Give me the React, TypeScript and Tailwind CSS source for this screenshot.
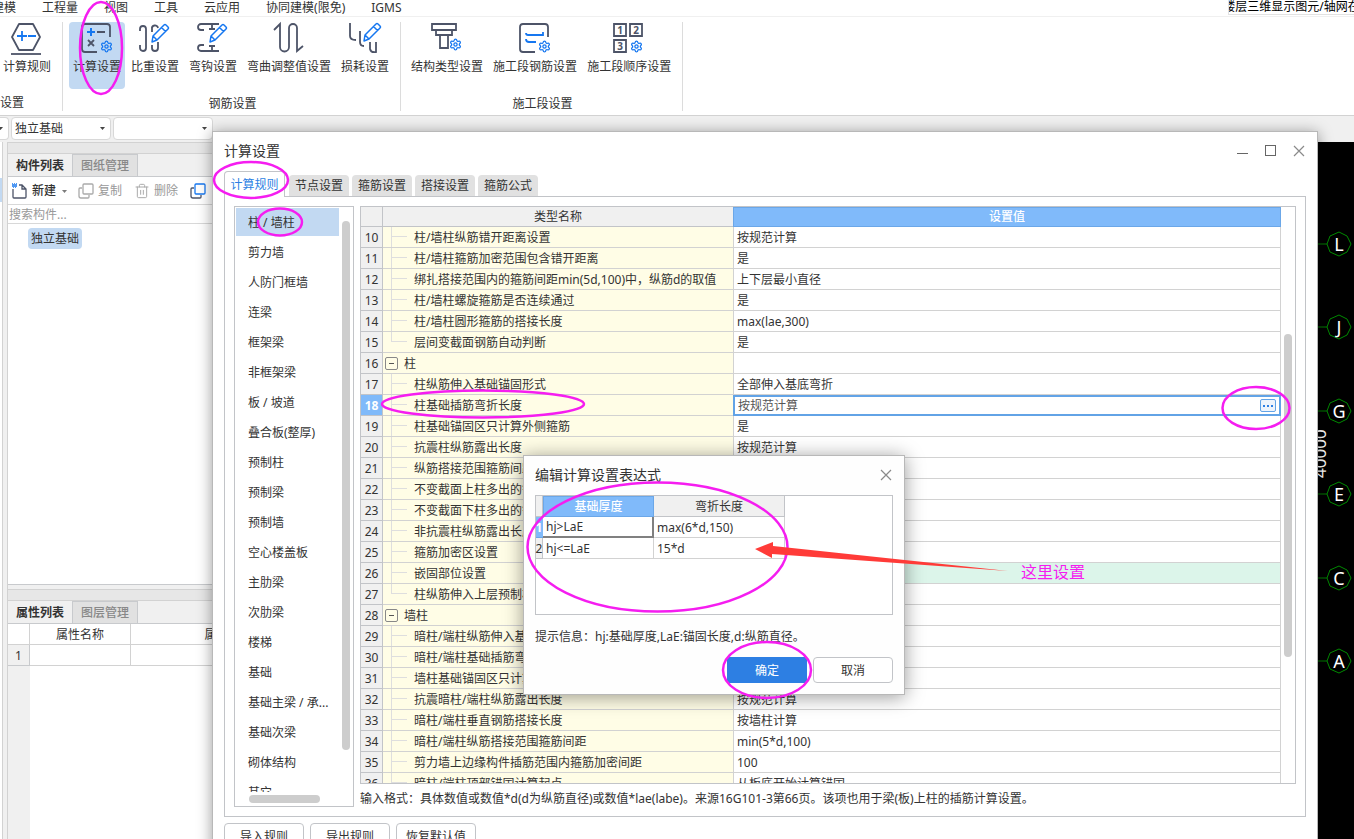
import type { ReactNode } from "react";
import { Settings, Trash2 } from "lucide-react";
import clsx from "clsx";

const INK = "#4d5468";
const BLUE = "#1677f0";

type Row = { no: number; name: string; value?: string; group?: boolean; last?: boolean };

const rows: Row[] = [
  { no: 10, name: "柱/墙柱纵筋错开距离设置", value: "按规范计算" },
  { no: 11, name: "柱/墙柱箍筋加密范围包含错开距离", value: "是" },
  { no: 12, name: "绑扎搭接范围内的箍筋间距min(5d,100)中，纵筋d的取值", value: "上下层最小直径" },
  { no: 13, name: "柱/墙柱螺旋箍筋是否连续通过", value: "是" },
  { no: 14, name: "柱/墙柱圆形箍筋的搭接长度", value: "max(lae,300)" },
  { no: 15, name: "层间变截面钢筋自动判断", value: "是", last: true },
  { no: 16, name: "柱", group: true },
  { no: 17, name: "柱纵筋伸入基础锚固形式", value: "全部伸入基底弯折" },
  { no: 18, name: "柱基础插筋弯折长度", value: "按规范计算" },
  { no: 19, name: "柱基础锚固区只计算外侧箍筋", value: "是" },
  { no: 20, name: "抗震柱纵筋露出长度", value: "按规范计算" },
  { no: 21, name: "纵筋搭接范围箍筋间距" },
  { no: 22, name: "不变截面上柱多出的钢筋" },
  { no: 23, name: "不变截面下柱多出的钢筋" },
  { no: 24, name: "非抗震柱纵筋露出长度" },
  { no: 25, name: "箍筋加密区设置" },
  { no: 26, name: "嵌固部位设置" },
  { no: 27, name: "柱纵筋伸入上层预制柱", last: true },
  { no: 28, name: "墙柱", group: true },
  { no: 29, name: "暗柱/端柱纵筋伸入基础" },
  { no: 30, name: "暗柱/端柱基础插筋弯折" },
  { no: 31, name: "墙柱基础锚固区只计算" },
  { no: 32, name: "抗震暗柱/端柱纵筋露出长度", value: "按规范计算" },
  { no: 33, name: "暗柱/端柱垂直钢筋搭接长度", value: "按墙柱计算" },
  { no: 34, name: "暗柱/端柱纵筋搭接范围箍筋间距", value: "min(5*d,100)" },
  { no: 35, name: "剪力墙上边缘构件插筋范围内箍筋加密间距", value: "100" },
  { no: 36, name: "暗柱/端柱顶部锚固计算起点", value: "从板底开始计算锚固" },
];

const members = [
  "柱 / 墙柱", "剪力墙", "人防门框墙", "连梁", "框架梁", "非框架梁", "板 / 坡道",
  "叠合板(整厚)", "预制柱", "预制梁", "预制墙", "空心楼盖板", "主肋梁", "次肋梁",
  "楼梯", "基础", "基础主梁 / 承...", "基础次梁", "砌体结构", "其它",
];

const axes = [
  { label: "L", y: 102 },
  { label: "J", y: 185 },
  { label: "G", y: 269 },
  { label: "E", y: 352 },
  { label: "C", y: 436 },
  { label: "A", y: 519 },
];

const Icon = ({ children }: { children: ReactNode }) => (
  <svg className="h-8 w-8 overflow-visible" viewBox="0 0 32 32" fill="none" stroke={INK} strokeWidth="1.800">
    {children}
  </svg>
);

const Gear = ({ x = 19, y = 17 }: { x?: number; y?: number }) => (
  <Settings x={x} y={y} size={13} color={BLUE} strokeWidth={2.4} />
);

const Pen = ({ x = 12, y = 1 }: { x?: number; y?: number }) => (
  <path
    transform={`translate(${x} ${y})`}
    d="M1 18l1-6L13 1q1-1 2 0l2 2q1 1 0 2L6 16zM10.500 3.500l4 4M2 12l4 4"
    stroke={BLUE}
    strokeWidth="1.500"
    strokeLinejoin="round"
  />
);

const icons = {
  rule: (
    <Icon>
      <path d="M8 1h14l7 13-7 13H8L1 14z" strokeLinejoin="round" />
      <path d="M6 13h10M11 8v10M17 13h8" stroke={BLUE} />
      <path d="M0 31h30" />
    </Icon>
  ),
  calc: (
    <Icon>
      <path d="M29 14V4q0-3-3-3H4Q1 1 1 4v22q0 3 3 3h12" />
      <path d="M6 9h8M10 5v8" stroke={BLUE} strokeWidth="2" />
      <path d="M16 9h8M7 17l6 6M13 17l-6 6" />
      <Gear />
    </Icon>
  ),
  weight: (
    <Icon>
      <path d="M1 8V6a3 3 0 0 1 6 0v19a3 3 0 0 1-6 0v-3" />
      <path d="M13 9V6a3 3 0 0 1 6-1M13 22v3a3 3 0 0 0 6 0v-6" />
      <Pen />
    </Icon>
  ),
  hook: (
    <Icon>
      <path d="M22 1H4a3 3 0 0 0 0 6h3M22 28H4a3 3 0 0 1 0-6h3M15 1v6M12 6h6M15 28v-6M12 23h6" />
      <Pen />
    </Icon>
  ),
  bend: (
    <Icon>
      <path d="M1 7l6-6v23a4 4 0 0 0 9 0V5a4 4 0 0 1 8 0v23l6-5" />
    </Icon>
  ),
  loss: (
    <Icon>
      <path d="M1 0v13q0 4 6 4M11 8v11q0 4 4 4M21 19v7q1 4 6 3V19" />
      <Pen x={14} y={0} />
    </Icon>
  ),
  column: (
    <Icon>
      <path d="M1 1h24v6H1zM5 7h16v5H5zM9 12h8v13H9z" />
      <Gear x={18} y={15} />
    </Icon>
  ),
  section: (
    <Icon>
      <path d="M29 14V4q0-3-3-3H4Q1 1 1 4v22q0 3 3 3h12" />
      <path d="M7 10q0 2 2 2h15v-3M7 16q0 3 3 3h7" stroke={BLUE} />
      <Gear />
    </Icon>
  ),
  order: (
    <Icon>
      <path d="M1 1h12v12H1zM17 1h12v12H17zM1 17h12v12H1z" />
      <g fill={INK} stroke="none" fontSize="10" fontWeight="700" textAnchor="middle">
        <text x="7" y="11">1</text>
        <text x="23" y="11">2</text>
        <text x="7" y="27">3</text>
      </g>
      <Gear x={17} />
    </Icon>
  ),
};

const RibbonButton = ({ icon, label, active }: { icon: ReactNode; label: string; active?: boolean }) => (
  <button className={clsx("flex h-[67px] flex-col items-center gap-1 rounded-sm px-1 pt-px", active && "bg-[#c2d9f2]")}>
    {icon}
    <span className="leading-4">{label}</span>
  </button>
);

const RibbonGroup = ({ title, children }: { title: string; children: ReactNode }) => (
  <div className="flex flex-col gap-[7px] border-r border-[#dcdcdc] pr-[7px] pl-1.5">
    <div className="flex gap-0.5">{children}</div>
    <div className="pl-[3px] text-center leading-4">{title}</div>
  </div>
);

const Ribbon = () => (
  <div className="flex h-[99px] shrink-0 overflow-hidden border-b border-[#d2d2d2] bg-white pt-[5px] pb-1 whitespace-nowrap">
    <div className="-ml-px flex flex-col gap-[7px] border-r border-[#dcdcdc] pr-[7px]">
      <RibbonButton icon={icons.rule} label="计算规则" />
      <div className="pl-px leading-4">设置</div>
    </div>
    <RibbonGroup title="钢筋设置">
      <RibbonButton icon={icons.calc} label="计算设置" active />
      <RibbonButton icon={icons.weight} label="比重设置" />
      <RibbonButton icon={icons.hook} label="弯钩设置" />
      <RibbonButton icon={icons.bend} label="弯曲调整值设置" />
      <RibbonButton icon={icons.loss} label="损耗设置" />
    </RibbonGroup>
    <RibbonGroup title="施工段设置">
      <RibbonButton icon={icons.column} label="结构类型设置" />
      <RibbonButton icon={icons.section} label="施工段钢筋设置" />
      <RibbonButton icon={icons.order} label="施工段顺序设置" />
    </RibbonGroup>
  </div>
);

const MenuBar = () => (
  <nav className="flex h-[17px] shrink-0 justify-between overflow-hidden border-b border-[#f0f0f0] bg-white whitespace-nowrap">
    <div className="-ml-2 flex gap-[26px] leading-4">
      {["建模", "工程量", "视图", "工具", "云应用", "协同建模(限免)", "IGMS"].map((m) => (
        <button key={m}>{m}</button>
      ))}
    </div>
    <div className="flex h-[15px] w-[126px] justify-center overflow-hidden border-b border-l border-[#e2e2e2] leading-[14px] text-black">
      <span className="shrink-0">楼层三维显示图元/轴网在</span>
    </div>
  </nav>
);

const Caret = ({ className }: { className?: string }) => (
  <svg className={clsx("pointer-events-none h-[3px] w-[5px]", className)} viewBox="0 0 5 3" fill="#444">
    <path d="M0 0h5L2.500 3z" />
  </svg>
);

const Picker = ({ label, value }: { label: string; value: string }) => (
  <div className="relative flex">
    <select
      aria-label={label}
      className="h-[23px] w-[100px] appearance-none rounded-sm border border-[#d8d8d8] bg-white px-[3px] leading-5"
    >
      <option>{value}</option>
    </select>
    <Caret className="absolute top-2.5 right-1.5" />
  </div>
);

const DockTabs = ({ active, other }: { active: string; other: string }) => (
  <>
    <div className="h-3 shrink-0 border-y border-[#d2d2d2] bg-[#e7e7e7]" />
    <div className="flex h-[23px] shrink-0 border-b border-[#c8cacd] bg-[#f0f0f0] leading-[22px]">
      <button className="w-16 pt-px font-bold">{active}</button>
      <button className="w-[66px] border-x border-t border-[#c8cacd] bg-[#e1e1e1] font-medium text-[#888]">{other}</button>
    </div>
  </>
);

const CopyIcon = ({ front, back }: { front: string; back: string }) => (
  <svg className="h-4 w-4 shrink-0" viewBox="0 0 16 16" fill="none">
    <path d="M4 5H2q-1 0-1 1v7q0 2 2 2h7q1 0 1-1v-2" stroke={back} strokeWidth="1.300" />
    <rect x="5" y="1" width="10" height="10" rx="1" fill="#fff" stroke={front} strokeWidth="1.300" />
  </svg>
);

const Dock = () => (
  <aside className="flex w-[212px] shrink-0 flex-col border-l border-[#d2d2d2] whitespace-nowrap">
    <section className="flex h-[443px] shrink-0 flex-col border-b border-[#c8cacd] bg-white">
      <DockTabs active="构件列表" other="图纸管理" />
      <div className="flex h-7 shrink-0 items-center border-b border-[#d8d8d8] pt-px pl-1">
        <button className="flex items-center gap-1">
          <svg className="h-4 w-4" viewBox="0 0 16 16" fill="none" stroke={INK} strokeWidth="1.300">
            <path d="M1 6v8q0 1 1 1h11q1 0 1-1V6L10 2H7M10 2v4h4" />
            <path d="M0 1h1M2 1h1M4 1h1M1 2h1M3 2h1M0 3h1M2 3h1M4 3h1M1 4h1M3 4h1" stroke={BLUE} />
          </svg>
          <span className="font-medium">新建</span>
          <Caret className="ml-0.5 opacity-70" />
        </button>
        <button className="ml-[11px] flex items-center gap-1 text-[#999]">
          <CopyIcon front="#aaa" back="#aaa" />
          复制
        </button>
        <button className="ml-3 flex items-center gap-1 text-[#999]">
          <Trash2 size={16} strokeWidth={1.5} color="#aaa" />
          删除
        </button>
        <button className="ml-3" aria-label="层间复制">
          <CopyIcon front={BLUE} back={INK} />
        </button>
      </div>
      <input
        aria-label="搜索构件"
        placeholder="搜索构件..."
        className="h-[19px] shrink-0 border-b border-[#d8d8d8] px-px outline-none placeholder:text-[#999]"
      />
      <ul className="pt-1 pl-5">
        <li>
          <button className="h-[21px] rounded-sm bg-[#c2d9f2] px-[3px]">独立基础</button>
        </li>
      </ul>
    </section>
    <section className="mt-1 flex flex-1 flex-col bg-white">
      <DockTabs active="属性列表" other="图层管理" />
      <div className="flex flex-1 flex-col bg-linear-to-r from-[#f0f0f0] from-[22px] to-white to-[22px]">
        <table className="w-[306px] table-fixed border-separate border-spacing-0">
          <thead>
            <tr className="h-[21px] bg-white">
              <th className="w-[22px] border-r border-b border-[#d2d2d2] p-0" />
              <th className="w-[101px] border-r border-b border-[#d2d2d2] p-0 pt-px font-normal">属性名称</th>
              <th className="border-b border-[#d2d2d2] p-0 pt-px font-normal">属性值</th>
            </tr>
          </thead>
          <tbody>
            <tr className="h-[21px] bg-white">
              <td className="border-r border-b border-[#c8cacd] bg-[#f0f0f0] p-0 pt-px text-center">1</td>
              <td className="border-r border-b border-[#d2d2d2] p-0" />
              <td className="border-b border-[#d2d2d2] p-0" />
            </tr>
          </tbody>
        </table>
      </div>
    </section>
  </aside>
);

const AxisCanvas = () => (
  <svg className="w-12 shrink-0 bg-black" fill="none">
    {axes.map(({ label, y }) => (
      <g key={label} transform={`translate(33 ${y})`}>
        <path d="M-24 0h12" stroke="#008000" />
        <path d="M-12 0l3-8 9-4 8 4 4 8-4 8-8 4-9-4z" stroke="#008a00" />
        <text y="7" textAnchor="middle" fontSize="18" fill="#fff">{label}</text>
      </g>
    ))}
    <text transform="translate(20 336) rotate(-90)" fontSize="17" fill="#fff">40000</text>
  </svg>
);

const Cross = () => (
  <svg className="h-3 w-3" viewBox="0 0 12 12" stroke="#8a8a8a" strokeWidth="1.200">
    <path d="M1 1l10 10M11 1L1 11" />
  </svg>
);

const Branch = ({ last }: { last?: boolean }) => (
  <span className="mr-[7px] ml-2 flex h-5 w-4 flex-col">
    <span className="h-2.5 border-b border-l border-[#dedede]" />
    {!last && <span className="h-2.5 border-l border-[#dedede]" />}
  </span>
);

const SettingsTable = () => (
  <div className="flex min-h-0 flex-1 overflow-hidden border border-[#c2c4c8]">
    <table className="w-full table-fixed self-start border-separate border-spacing-0 leading-[18px]">
      <thead>
        <tr className="h-5">
          <th className="w-[22px] border-r border-b border-[#c2c4c8] bg-[#f0f0f0] p-0" />
          <th className="w-[350px] border-b border-[#c2c4c8] bg-[#f0f0f0] p-0 pt-px font-normal">类型名称</th>
          <th className="border border-[#6ba7e8] bg-[#80bafa] p-0 font-medium text-white">设置值</th>
        </tr>
      </thead>
      <tbody>
        {rows.map((row) => {
          const selected = row.no === 18;
          return (
            <tr key={row.no} className="h-[21px]">
              <td
                className={clsx(
                  "border-r border-b border-[#c2c4c8] p-0 pt-0.5 text-center",
                  selected ? "bg-[#80bafa] font-bold text-white" : "bg-[#f0f0f0]"
                )}
              >
                {row.no}
              </td>
              <td className="border-b border-[#d2d2d2] bg-[#fffde6] p-0">
                <div className="flex h-5 items-center overflow-hidden whitespace-nowrap">
                  {row.group ? (
                    <button
                      aria-label="折叠"
                      className="mr-1.5 ml-0.5 flex h-[13px] w-[13px] items-center justify-center rounded-xs border border-[#888]"
                    >
                      <span className="h-px w-[5px] bg-[#555]" />
                    </button>
                  ) : (
                    <Branch last={row.last} />
                  )}
                  <span className="pt-0.5">{row.name}</span>
                </div>
              </td>
              {selected ? (
                <td className="border-2 border-[#62a3e6] bg-white p-0">
                  <div className="flex h-[17px] items-center px-[3px]">
                    <input aria-label={row.name} defaultValue={row.value} className="h-4 min-w-0 flex-1 text-[#555] outline-none" />
                    <button
                      aria-label="编辑"
                      className="flex h-[13px] w-4 items-center justify-center gap-0.5 rounded-xs border border-[#62a3e6] bg-[#eef4fc]"
                    >
                      <span className="h-0.5 w-0.5 bg-[#2d7fe3]" />
                      <span className="h-0.5 w-0.5 bg-[#2d7fe3]" />
                      <span className="h-0.5 w-0.5 bg-[#2d7fe3]" />
                    </button>
                  </div>
                </td>
              ) : (
                <td className={clsx("border-x border-b border-[#d2d2d2] p-0 pt-0.5 pl-[3px]", row.no === 26 ? "bg-[#dcf5ea]" : "bg-white")}>
                  {row.value}
                </td>
              )}
            </tr>
          );
        })}
      </tbody>
    </table>
    <div className="w-3.5 shrink-0 px-[3px] pt-[127px]">
      <div className="h-[323px] rounded-full bg-[#cdcdcd]" />
    </div>
  </div>
);

const MemberList = () => (
  <div className="flex w-[120px] shrink-0 flex-col overflow-hidden border border-[#c2c4c8] whitespace-nowrap">
    <div className="flex min-h-0 flex-1 overflow-hidden pt-px pl-px">
      <ul className="flex flex-1 flex-col gap-0.5">
        {members.map((m, i) => (
          <li key={m}>
            <button className={clsx("h-7 w-full pt-0.5 pl-3 text-left", i === 0 && "bg-[#c2d9f2]")}>{m}</button>
          </li>
        ))}
      </ul>
      <div className="w-3.5 shrink-0 px-[3px] pt-[13px]">
        <div className="h-[529px] rounded-full bg-[#cdcdcd]" />
      </div>
    </div>
    <div className="h-3.5 shrink-0 pt-[3px] pl-3.5">
      <div className="h-2 w-[71px] rounded-full bg-[#cdcdcd]" />
    </div>
  </div>
);

const SettingsWindow = () => (
  <div className="absolute top-[131px] right-9 -bottom-6 left-[212px] flex flex-col border border-[#b8b8b8] bg-white px-[11px] pb-[13px] shadow-[0_2px_14px_rgba(0,0,0,0.4)]">
    <header className="flex h-[39px] shrink-0 items-center justify-between pr-px pb-0.5">
      <h2 className="text-sm">计算设置</h2>
      <div className="flex items-center gap-[17px]">
        <button aria-label="最小化" className="flex h-3 w-[11px] items-center pt-1.5">
          <span className="h-px w-full bg-[#666]" />
        </button>
        <button aria-label="最大化" className="h-[11px] w-[11px] border border-[#666]" />
        <button aria-label="关闭">
          <Cross />
        </button>
      </div>
    </header>
    <div className="z-10 -mb-px flex h-[26px] shrink-0 items-start leading-5">
      <button className="mr-1 h-[26px] w-[61px] rounded-t-sm border-x border-t border-[#c2c4c8] bg-white text-[#2d7fe3]">
        计算规则
      </button>
      <div className="flex gap-[3px] pt-1">
        {["节点设置", "箍筋设置", "搭接设置", "箍筋公式"].map((t) => (
          <button key={t} className="h-[21px] rounded-t-sm bg-[#e1e1e1] px-1.5">
            {t}
          </button>
        ))}
      </div>
    </div>
    <div className="flex min-h-0 flex-1 gap-1.5 border border-[#c2c4c8] p-[9px]">
      <MemberList />
      <div className="flex min-w-0 flex-1 flex-col">
        <SettingsTable />
        <p className="h-[23px] shrink-0 pt-[7px] leading-4 whitespace-nowrap">
          输入格式：具体数值或数值*d(d为纵筋直径)或数值*lae(labe)。来源16G101-3第66页。该项也用于梁(板)上柱的插筋计算设置。
        </p>
      </div>
    </div>
    <div className="mt-1.5 flex shrink-0 gap-1.5">
      {["导入规则", "导出规则", "恢复默认值"].map((t) => (
        <button key={t} className="h-[26px] w-20 rounded-sm border border-[#c2c4c8] bg-white pt-px">
          {t}
        </button>
      ))}
    </div>
  </div>
);

const ExpressionDialog = () => (
  <div className="absolute top-[455px] left-[523px] w-[382px] border border-[#b8b8b8] bg-[#fefefe] px-[11px] pb-[11px] shadow-[0_2px_18px_rgba(0,0,0,0.4)]">
    <header className="flex h-[39px] items-center justify-between pr-px pb-0.5">
      <h3 className="text-sm">编辑计算设置表达式</h3>
      <button aria-label="关闭">
        <Cross />
      </button>
    </header>
    <div className="h-[120px] border border-[#c2c4c8] bg-white">
      <table className="w-[249px] table-fixed border-separate border-spacing-0 leading-[18px]">
        <thead>
          <tr className="h-[21px]">
            <th className="w-[7px] border-r border-b border-[#c2c4c8] bg-[#f0f0f0] p-0" />
            <th className="w-[111px] border border-[#6ba7e8] bg-[#80bafa] p-0 pt-px font-medium text-white">基础厚度</th>
            <th className="border-r border-b border-[#c2c4c8] bg-[#f0f0f0] p-0 pt-0.5 font-normal">弯折长度</th>
          </tr>
        </thead>
        <tbody>
          <tr className="h-[21px]">
            <td className="border-b border-[#6ba7e8] bg-[#80bafa] p-0 pt-0.5 font-bold text-white">
              <span className="flex w-1.5 justify-center">1</span>
            </td>
            <td className="border-r-2 border-b-2 border-[#808080] p-0 pt-px pl-[3px]">hj&gt;LaE</td>
            <td className="border-r border-b border-[#d2d2d2] p-0 pt-0.5 pl-[3px]">max(6*d,150)</td>
          </tr>
          <tr className="h-[21px]">
            <td className="border-r border-b border-[#c2c4c8] bg-[#f0f0f0] p-0 pt-0.5">
              <span className="flex w-1.5 justify-center">2</span>
            </td>
            <td className="border-r border-b border-[#d2d2d2] p-0 pt-0.5 pl-[3px]">hj&lt;=LaE</td>
            <td className="border-r border-b border-[#d2d2d2] p-0 pt-0.5 pl-[3px]">15*d</td>
          </tr>
        </tbody>
      </table>
    </div>
    <p className="h-[42px] pt-3 leading-5">提示信息：hj:基础厚度,LaE:锚固长度,d:纵筋直径。</p>
    <div className="flex justify-end gap-1.5">
      <button className="h-[26px] w-20 bg-[#2d7fe3] pt-px text-white">确定</button>
      <button className="h-[26px] w-20 rounded-sm border border-[#c2c4c8] bg-white pt-px">取消</button>
    </div>
  </div>
);

const Markup = () => (
  <svg className="pointer-events-none absolute inset-0 z-20 h-full w-full" fill="none" stroke="#f51df0" strokeWidth="2.500">
    <ellipse cx="101" cy="48" rx="21" ry="46" />
    <ellipse cx="251" cy="180" rx="37" ry="18" />
    <ellipse cx="280" cy="222" rx="22" ry="13.500" />
    <ellipse cx="483" cy="404" rx="101" ry="13.500" />
    <ellipse cx="1256" cy="408" rx="33.500" ry="21" />
    <ellipse cx="657.500" cy="547" rx="130" ry="64.500" />
    <ellipse cx="767" cy="670" rx="44" ry="28" />
    <path d="M755 549l18-7v4l235 25-236-17v4z" fill="#ff3b38" stroke="none" />
    <text x="1021" y="578" fontSize="16" fill="#f51df0" stroke="none">这里设置</text>
  </svg>
);

export default function App() {
  return (
    <div className="relative flex h-screen flex-col overflow-hidden bg-[#f0f0f0] font-['Noto_Sans','Noto_Sans_CJK_SC',sans-serif] text-xs text-[#333]">
      <MenuBar />
      <Ribbon />
      <div className="flex h-[26px] shrink-0 gap-0.5 pt-px">
        <div className="flex h-[23px] w-[9px] items-center rounded-r-sm border-y border-r border-[#d8d8d8] bg-white">
          <Caret className="-ml-0.5" />
        </div>
        <Picker label="构件类型" value="独立基础" />
        <Picker label="构件" value="" />
      </div>
      <div className="flex min-h-0 flex-1">
        <div className="mr-1 w-[3px] shrink-0 border-r border-[#d2d2d2] bg-white pt-9">
          <div className="h-6 bg-[#c2d9f2]" />
        </div>
        <Dock />
        <div className="flex-1" />
        <AxisCanvas />
      </div>
      <SettingsWindow />
      <ExpressionDialog />
      <Markup />
    </div>
  );
}
